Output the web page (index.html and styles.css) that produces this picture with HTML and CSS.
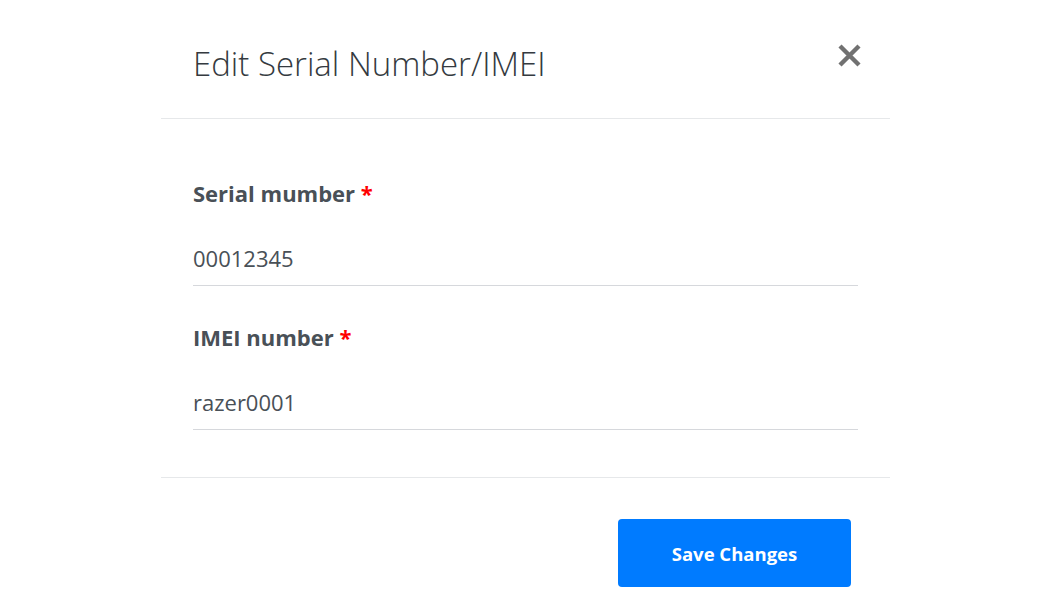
FILE: index.html
```html
<!DOCTYPE html>
<html lang="en">
<head>
<meta charset="utf-8">
<title>Edit Serial Number/IMEI</title>
<link rel="stylesheet" href="styles.css">
</head>
<body>
<div class="modal">
  <div class="modal-header">
    <h1 class="modal-title">Edit Serial Number/IMEI</h1>
    <button class="close" aria-label="Close">
      <svg width="25" height="25" viewBox="0 0 25 25"><path d="M3 3 L22 22 M22 3 L3 22" stroke="#717171" stroke-width="4.4" fill="none"/></svg>
    </button>
  </div>
  <div class="modal-body">
    <div class="field">
      <label class="field-label">Serial mumber <span class="req">*</span></label>
      <div class="field-input">00012345</div>
    </div>
    <div class="field">
      <label class="field-label">IMEI number <span class="req">*</span></label>
      <div class="field-input">razer0001</div>
    </div>
  </div>
  <div class="modal-footer">
    <button class="btn-primary">Save Changes</button>
  </div>
</div>
</body>
</html>
```
FILE: styles.css
```css
html, body {
  margin: 0;
  padding: 0;
  background: #fff;
}
body {
  font-family: "Open Sans", "Noto Sans", sans-serif;
  color: #495057;
}
.modal {
  margin-left: 161px;
  width: 729px;
}
.modal-header {
  display: flex;
  justify-content: space-between;
  align-items: flex-start;
  height: 119px;
  padding: 0 28px 0 32px;
  border-bottom: 1px solid #e6e8ea;
  box-sizing: border-box;
}
.modal-title {
  margin: 44px 0 0 0;
  font-size: 33px;
  font-weight: 300;
  line-height: 40px;
  color: #343a40;
}
.close {
  margin-top: 43px;
  padding: 0;
  border: 0;
  background: none;
  width: 25px;
  height: 25px;
  display: block;
}
.close svg { display: block; }
.modal-body {
  padding: 58px 32px 47px 32px;
  border-bottom: 1px solid #e6e8ea;
}
.field {
  margin-bottom: 35px;
}
.field:last-child { margin-bottom: 0; }
.field-label {
  display: block;
  font-size: 22px;
  font-weight: 700;
  line-height: 32px;
  color: #495057;
  margin-bottom: 30px;
}
.req { color: #ff0000; }
.field-input {
  font-size: 22px;
  line-height: 30px;
  padding: 4px 0 12px 0;
  border-bottom: 1px solid #d6d8dc;
  color: #495057;
}
.modal-footer {
  display: flex;
  justify-content: flex-end;
  padding: 41px 39px 0 0;
}
.btn-primary {
  width: 233px;
  height: 68px;
  border: 0;
  border-radius: 4px;
  background: #007bff;
  color: #fff;
  font-family: "Open Sans", "Noto Sans", sans-serif;
  font-size: 18.5px;
  font-weight: 700;
}
```
